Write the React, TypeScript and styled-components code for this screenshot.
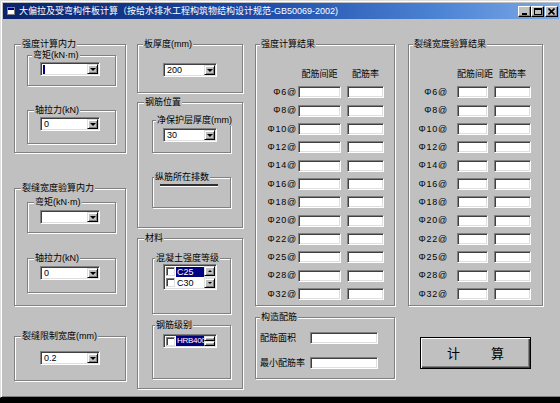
import React from "react";
import styled, { createGlobalStyle } from "styled-components";

const FACE = "#c0c0c0";
const FONT = `"Liberation Sans", "Noto Sans CJK SC", sans-serif`;

const Global = createGlobalStyle`
  html, body { margin: 0; padding: 0; }
  body {
    width: 560px; height: 403px; overflow: hidden; background: #000;
    font-family: ${FONT};
    font-size: 9px; color: #000;
  }
  * { box-sizing: border-box; }
`;

const Window = styled.div`
  width: 562px;
  height: 398px;
  background: ${FACE};
  border: 1px solid;
  border-color: #dfdfdf #000 #000 #dfdfdf;
  box-shadow: inset 1px 1px 0 #fff, inset -1px -1px 0 #808080;
  padding: 2px;
  display: flex;
  flex-direction: column;
`;

const TitleBar = styled.div`
  flex: none;
  height: 16px;
  margin-bottom: 1px;
  display: flex;
  align-items: center;
  padding: 0 1px 0 4px;
  background: linear-gradient(90deg, #0a246a 0%, #1c4aa8 45%, #4f86d6 80%, #7eaae6 100%);
  color: #fff;
`;

const TitleText = styled.span`
  flex: 1;
  margin-left: 4px;
  font-size: 9px;
  line-height: 12px;
  white-space: nowrap;
`;

const CaptionButtons = styled.div`
  display: flex;
  align-items: center;
`;

const CapBtn = styled.div<{ $gap?: number }>`
  width: 13px;
  height: 11px;
  margin-left: ${(p) => p.$gap ?? 0}px;
  background: ${FACE};
  border: 1px solid;
  border-color: #fff #000 #000 #fff;
  box-shadow: inset -1px -1px 0 #808080;
  display: flex;
  align-items: center;
  justify-content: center;
`;

const Client = styled.div`
  flex: 1;
  display: flex;
  align-items: flex-start;
  padding: 24px 0 0 11px;
`;

const Column = styled.div<{ $w: number; $ml?: number }>`
  flex: none;
  width: ${(p) => p.$w}px;
  margin-left: ${(p) => p.$ml ?? 0}px;
  display: flex;
  flex-direction: column;
  align-items: flex-start;
`;

const Group = styled.div<{ $w?: number; $h: number; $mt?: number; $pl?: number }>`
  flex: none;
  width: ${(p) => (p.$w ? `${p.$w}px` : "100%")};
  height: ${(p) => p.$h}px;
  margin-top: ${(p) => p.$mt ?? 0}px;
  padding-left: ${(p) => p.$pl ?? 0}px;
  border: 1px solid #808080;
  box-shadow: inset 1px 1px 0 #fff, 1px 1px 0 #fff;
  display: flex;
  flex-direction: column;
  align-items: flex-start;
`;

const Caption = styled.span<{ $ml?: number }>`
  flex: none;
  height: 11px;
  margin: -6px 0 0 ${(p) => p.$ml ?? 4}px;
  align-self: flex-start;
  padding: 0 1px;
  background: ${FACE};
  font-size: 9px;
  line-height: 11px;
  white-space: nowrap;
`;

const ComboField = styled.div<{ $w: number; $mt?: number }>`
  flex: none;
  width: ${(p) => p.$w}px;
  height: 14px;
  margin-top: ${(p) => p.$mt ?? 0}px;
  background: #fff;
  border: 1px solid;
  border-color: #808080 #fff #fff #808080;
  box-shadow: inset 1px 1px 0 #404040, inset -1px -1px 0 #dfdfdf;
  padding: 1px;
  display: flex;
  align-items: stretch;
`;

const ComboText = styled.span`
  flex: 1;
  display: flex;
  align-items: center;
  padding-left: 2px;
  font-size: 9px;
  line-height: 10px;
  white-space: nowrap;
`;

const Caret = styled.span`
  width: 2px;
  height: 9px;
  margin-left: -1px;
  background: #000080;
`;

const DropBtn = styled.span`
  flex: none;
  width: 11px;
  background: ${FACE};
  border: 1px solid;
  border-color: #dfdfdf #000 #000 #dfdfdf;
  box-shadow: inset 1px 1px 0 #fff, inset -1px -1px 0 #808080;
  display: flex;
  align-items: center;
  justify-content: center;
`;

const Arrow = styled.span<{ $up?: boolean; $s?: number }>`
  width: 0;
  height: 0;
  border-left: ${(p) => p.$s ?? 3}px solid transparent;
  border-right: ${(p) => p.$s ?? 3}px solid transparent;
  ${(p) =>
    p.$up
      ? `border-bottom: ${p.$s ?? 3}px solid #000;`
      : `border-top: ${p.$s ?? 3}px solid #000;`}
`;

const RuleLine = styled.div<{ $w: number; $mt?: number }>`
  width: ${(p) => p.$w}px;
  height: 2px;
  margin-top: ${(p) => p.$mt ?? 0}px;
  background: #303030;
  box-shadow: 0 1px 0 #fff;
`;

const ListBox = styled.div<{ $w: number; $h: number; $mt?: number }>`
  flex: none;
  width: ${(p) => p.$w}px;
  height: ${(p) => p.$h}px;
  margin-top: ${(p) => p.$mt ?? 0}px;
  background: #fff;
  border: 1px solid;
  border-color: #808080 #fff #fff #808080;
  box-shadow: inset 1px 1px 0 #404040, inset -1px -1px 0 #dfdfdf;
  padding: 1px;
  display: flex;
`;

const ListItems = styled.div`
  flex: 1;
  min-width: 0;
  display: flex;
  flex-direction: column;
  overflow: hidden;
`;

const ListRow = styled.div`
  height: 11px;
  display: flex;
  align-items: center;
  padding-left: 1px;
`;

const Check = styled.span`
  flex: none;
  width: 9px;
  height: 9px;
  background: #fff;
  border: 1px solid;
  border-color: #808080 #dfdfdf #dfdfdf #808080;
  box-shadow: inset 1px 1px 0 #404040;
`;

const ItemText = styled.span<{ $sel?: boolean; $tight?: boolean }>`
  flex: 1;
  min-width: 0;
  height: 10px;
  margin-left: 1px;
  padding-left: 1px;
  font-size: ${(p) => (p.$tight ? 8 : 9)}px;
  letter-spacing: ${(p) => (p.$tight ? "-0.3px" : "0")};
  line-height: 10px;
  white-space: nowrap;
  overflow: hidden;
  background: ${(p) => (p.$sel ? "#000080" : "transparent")};
  color: ${(p) => (p.$sel ? "#fff" : "#000")};
`;

const ScrollBar = styled.div`
  flex: none;
  width: 11px;
  display: flex;
  flex-direction: column;
  justify-content: space-between;
  background: #e4e4e4;
`;

const ScrollBtn = styled.div<{ $h: number }>`
  flex: none;
  height: ${(p) => p.$h}px;
  background: ${FACE};
  border: 1px solid;
  border-color: #dfdfdf #000 #000 #dfdfdf;
  box-shadow: inset 1px 1px 0 #fff, inset -1px -1px 0 #808080;
  display: flex;
  align-items: center;
  justify-content: center;
`;

const ResultGrid = styled.div<{ $cols: string; $mt: number }>`
  display: grid;
  grid-template-columns: ${(p) => p.$cols};
  grid-auto-rows: 18.33px;
  align-items: center;
  margin-top: ${(p) => p.$mt}px;
`;

const HeadCell = styled.span<{ $pl?: number }>`
  padding-left: ${(p) => p.$pl ?? 0}px;
  text-align: center;
  font-size: 9px;
  line-height: 11px;
  white-space: nowrap;
`;

const BarLabel = styled.span`
  text-align: right;
  padding-right: 1px;
  font-size: 9px;
  line-height: 11px;
  letter-spacing: 0.8px;
  white-space: nowrap;
`;

const TextBox = styled.div<{ $w: number; $ml?: number }>`
  width: ${(p) => p.$w}px;
  height: 12px;
  margin-left: ${(p) => p.$ml ?? 0}px;
  background: #fff;
  border: 1px solid;
  border-color: #808080 #fff #fff #808080;
  box-shadow: inset 1px 1px 0 #404040, inset -1px -1px 0 #dfdfdf;
`;

const FormGrid = styled.div`
  display: grid;
  grid-template-columns: 50px 68px;
  grid-auto-rows: 12px;
  row-gap: 13px;
  align-items: center;
  margin: 9px 0 0 4px;
`;

const FormLabel = styled.span`
  font-size: 9px;
  line-height: 11px;
  white-space: nowrap;
`;

const CalcButton = styled.button`
  width: 111px;
  height: 32px;
  margin: 31px 0 0 12px;
  padding: 0;
  background: ${FACE};
  border: 1px solid #000;
  box-shadow: inset 1px 1px 0 #fff, inset -1px -1px 0 #404040, inset -2px -2px 0 #808080;
  display: flex;
  align-items: center;
  justify-content: center;
  gap: 31px;
  font-family: "Noto Sans CJK SC", sans-serif;
  font-size: 13px;
  line-height: 16px;
  color: #000;
`;

const Combo: React.FC<{ w: number; mt?: number; value?: string; caret?: boolean }> = ({
  w,
  mt,
  value,
  caret,
}) => (
  <ComboField $w={w} $mt={mt}>
    <ComboText>{caret ? <Caret /> : value}</ComboText>
    <DropBtn>
      <Arrow />
    </DropBtn>
  </ComboField>
);

const bars = ["6", "8", "10", "12", "14", "16", "18", "20", "22", "25", "28", "32"];

const Results: React.FC<{ cols: string; w1: number; ml1: number; w2: number; ml2: number }> = ({
  cols,
  w1,
  ml1,
  w2,
  ml2,
}) => (
  <ResultGrid $cols={cols} $mt={15}>
    <span />
    <HeadCell $pl={ml1}>配筋间距</HeadCell>
    <HeadCell $pl={ml2}>配筋率</HeadCell>
    {bars.map((b) => (
      <React.Fragment key={b}>
        <BarLabel>{`Φ${b}@`}</BarLabel>
        <TextBox $w={w1} $ml={ml1} />
        <TextBox $w={w2} $ml={ml2} />
      </React.Fragment>
    ))}
  </ResultGrid>
);

const AppIcon = () => (
  <svg width="8" height="8" viewBox="0 0 8 8">
    <rect x="0.5" y="0.5" width="7" height="7" fill="#fff" stroke="#808080" />
    <rect x="1" y="1" width="6" height="2" fill="#000080" />
  </svg>
);

export default function App() {
  return (
    <>
      <Global />
      <Window>
        <TitleBar>
          <AppIcon />
          <TitleText>大偏拉及受弯构件板计算（按给水排水工程构筑物结构设计规范-GB50069-2002)</TitleText>
          <CaptionButtons>
            <CapBtn>
              <svg width="7" height="7" viewBox="0 0 7 7">
                <rect x="1" y="5" width="5" height="2" fill="#000" />
              </svg>
            </CapBtn>
            <CapBtn>
              <svg width="8" height="7" viewBox="0 0 8 7">
                <rect x="0.5" y="0.5" width="7" height="6" fill="none" stroke="#000" />
                <rect x="0" y="0" width="8" height="2" fill="#000" />
              </svg>
            </CapBtn>
            <CapBtn $gap={1}>
              <svg width="7" height="7" viewBox="0 0 7 7">
                <path d="M0.5 0.5 L6.5 6.5 M6.5 0.5 L0.5 6.5" stroke="#000" strokeWidth="1.6" />
              </svg>
            </CapBtn>
          </CaptionButtons>
        </TitleBar>

        <Client>
          {/* column 1 */}
          <Column $w={112}>
            <Group $h={109} $pl={12}>
              <Caption $ml={-6}>强度计算内力</Caption>
              <Group $w={89} $h={31} $mt={5} $pl={12}>
                <Caption $ml={-8}>弯矩(kN·m)</Caption>
                <Combo w={60} mt={1} caret />
              </Group>
              <Group $w={89} $h={34} $mt={24} $pl={12}>
                <Caption $ml={-6}>轴拉力(kN)</Caption>
                <Combo w={60} mt={1} value="0" />
              </Group>
            </Group>

            <Group $h={118} $mt={35} $pl={12}>
              <Caption $ml={-6}>裂缝宽度验算内力</Caption>
              <Group $w={89} $h={31} $mt={8} $pl={12}>
                <Caption $ml={-6}>弯矩(kN·m)</Caption>
                <Combo w={60} mt={2} value="" />
              </Group>
              <Group $w={89} $h={35} $mt={25} $pl={12}>
                <Caption $ml={-6}>轴拉力(kN)</Caption>
                <Combo w={60} mt={2} value="0" />
              </Group>
            </Group>

            <Group $h={45} $mt={30} $pl={25}>
              <Caption $ml={-19}>裂缝限制宽度(mm)</Caption>
              <Combo w={60} mt={9} value="0.2" />
            </Group>
          </Column>

          {/* column 2 */}
          <Column $w={106} $ml={11}>
            <Group $h={49} $pl={25}>
              <Caption $ml={-20}>板厚度(mm)</Caption>
              <Combo w={54} mt={13} value="200" />
            </Group>

            <Group $h={126} $mt={9} $pl={14}>
              <Caption $ml={-8}>钢筋位置</Caption>
              <Group $w={79} $h={33} $mt={12} $pl={10}>
                <Caption $ml={-7}>净保护层厚度(mm)</Caption>
                <Combo w={54} mt={2} value="30" />
              </Group>
              <Group $w={79} $h={31} $mt={24} $pl={7}>
                <Caption $ml={-6}>纵筋所在排数</Caption>
                <RuleLine $w={58} $mt={1} />
              </Group>
            </Group>

            <Group $h={151} $mt={10} $pl={14}>
              <Caption $ml={-8}>材料</Caption>
              <Group $w={79} $h={56} $mt={14} $pl={10}>
                <Caption $ml={-8}>混凝土强度等级</Caption>
                <ListBox $w={54} $h={26} $mt={0}>
                  <ListItems>
                    <ListRow>
                      <Check />
                      <ItemText $sel>C25</ItemText>
                    </ListRow>
                    <ListRow>
                      <Check />
                      <ItemText>C30</ItemText>
                    </ListRow>
                  </ListItems>
                  <ScrollBar>
                    <ScrollBtn $h={10}>
                      <Arrow $up $s={2} />
                    </ScrollBtn>
                    <ScrollBtn $h={10}>
                      <Arrow $s={2} />
                    </ScrollBtn>
                  </ScrollBar>
                </ListBox>
              </Group>
              <Group $w={79} $h={54} $mt={11} $pl={10}>
                <Caption $ml={-8}>钢筋级别</Caption>
                <ListBox $w={54} $h={14} $mt={3}>
                  <ListItems>
                    <ListRow>
                      <Check />
                      <ItemText $sel $tight>HRB400</ItemText>
                    </ListRow>
                  </ListItems>
                  <ScrollBar>
                    <ScrollBtn $h={5} />
                    <ScrollBtn $h={5} />
                  </ScrollBar>
                </ListBox>
              </Group>
            </Group>
          </Column>

          {/* column 3 */}
          <Column $w={140} $ml={12}>
            <Group $h={262}>
              <Caption>强度计算结果</Caption>
              <Results cols="42px 43px 43px" w1={43} ml1={0} w2={37} ml2={6} />
            </Group>
            <Group $h={62} $mt={11}>
              <Caption>构造配筋</Caption>
              <FormGrid>
                <FormLabel>配筋面积</FormLabel>
                <TextBox $w={68} />
                <FormLabel>最小配筋率</FormLabel>
                <TextBox $w={68} />
              </FormGrid>
            </Group>
          </Column>

          {/* column 4 */}
          <Column $w={135} $ml={13}>
            <Group $h={262}>
              <Caption>裂缝宽度验算结果</Caption>
              <Results cols="40px 39px 43px" w1={31} ml1={8} w2={37} ml2={6} />
            </Group>
            <CalcButton>
              <span>计</span>
              <span>算</span>
            </CalcButton>
          </Column>
        </Client>
      </Window>
    </>
  );
}
